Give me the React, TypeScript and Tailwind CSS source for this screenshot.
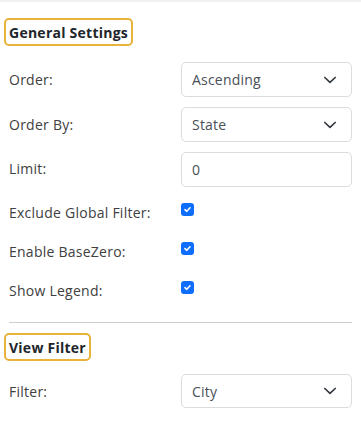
import React from "react";

function Chevron() {
  return (
    <svg width="14" height="8" viewBox="0 0 14 8" fill="none" className="shrink-0">
      <path d="M1.8 1.5 L7 6.3 L12.2 1.5" stroke="#343a40" strokeWidth="1.7" strokeLinecap="round" strokeLinejoin="round" />
    </svg>
  );
}

function Select({ value, h = "h-[35px]" }: { value: string; h?: string }) {
  return (
    <div className={`flex items-center justify-between ${h} w-[171px] border border-[#dcdcdc] rounded-[5px] pl-[10px] pr-[14px] text-[14px] tracking-[0.2px] text-[#495057] bg-white`}>
      <span>{value}</span>
      <Chevron />
    </div>
  );
}

function Check() {
  return (
    <div className="w-[13px] h-[13px] rounded-[3px] bg-[#0d6efd] flex items-center justify-center">
      <svg width="9" height="9" viewBox="0 0 9 9" fill="none">
        <path d="M2 4.6 L3.8 6.3 L7 2.8" stroke="white" strokeWidth="1.6" strokeLinecap="round" strokeLinejoin="round" />
      </svg>
    </div>
  );
}

function Heading({ children }: { children: React.ReactNode }) {
  return (
    <span className="inline-flex items-center -ml-[5px] h-[28px] border-2 border-[#e8b33b] rounded-[5px] px-[3px] font-bold text-[14px] tracking-[0.25px] text-[#212529]">
      {children}
    </span>
  );
}

const label = "text-[14px] tracking-[0.25px]";

export default function App() {
  return (
    <div className="w-[361px] h-[425px] bg-white border-t-2 border-[#f1f1f1] font-['Open_Sans',sans-serif] text-[#404040] overflow-hidden">
      <div className="px-[9px]">
        <div className="pt-[16px]">
          <Heading>General Settings</Heading>
        </div>

        <div className="grid grid-cols-2 items-center h-[35px] mt-[16px]">
          <div className={label}>Order:</div>
          <div className="pl-[0.5px]"><Select value="Ascending" /></div>
        </div>
        <div className="grid grid-cols-2 items-center h-[35px] mt-[10px]">
          <div className={label}>Order By:</div>
          <div className="pl-[0.5px]"><Select value="State" /></div>
        </div>
        <div className="grid grid-cols-2 items-center h-[35px] mt-[10px]">
          <div className={`${label} -mt-[2px]`}>Limit:</div>
          <div className="pl-[0.5px]">
            <div className="flex items-center h-[35px] w-[171px] border border-[#dcdcdc] rounded-[5px] pl-[10px] text-[14px] text-[#495057]">0</div>
          </div>
        </div>

        <div className="grid grid-cols-2 items-center h-[39px] mt-[6px]">
          <div className={label}>Exclude Global Filter:</div>
          <div className="pl-[0.5px] mb-[7px]"><Check /></div>
        </div>
        <div className="grid grid-cols-2 items-center h-[39px]">
          <div className={label}>Enable BaseZero:</div>
          <div className="pl-[0.5px] mb-[7px]"><Check /></div>
        </div>
        <div className="grid grid-cols-2 items-center h-[39px]">
          <div className={label}>Show Legend:</div>
          <div className="pl-[0.5px] mb-[7px]"><Check /></div>
        </div>

        <div className="h-px bg-[#cfcfcf] mt-[12px]" />

        <div className="pt-[10px]">
          <Heading>View Filter</Heading>
        </div>

        <div className="grid grid-cols-2 items-center h-[34px] mt-[13px]">
          <div className={label}>Filter:</div>
          <div className="pl-[0.5px]"><Select value="City" h="h-[34px]" /></div>
        </div>
      </div>
    </div>
  );
}
